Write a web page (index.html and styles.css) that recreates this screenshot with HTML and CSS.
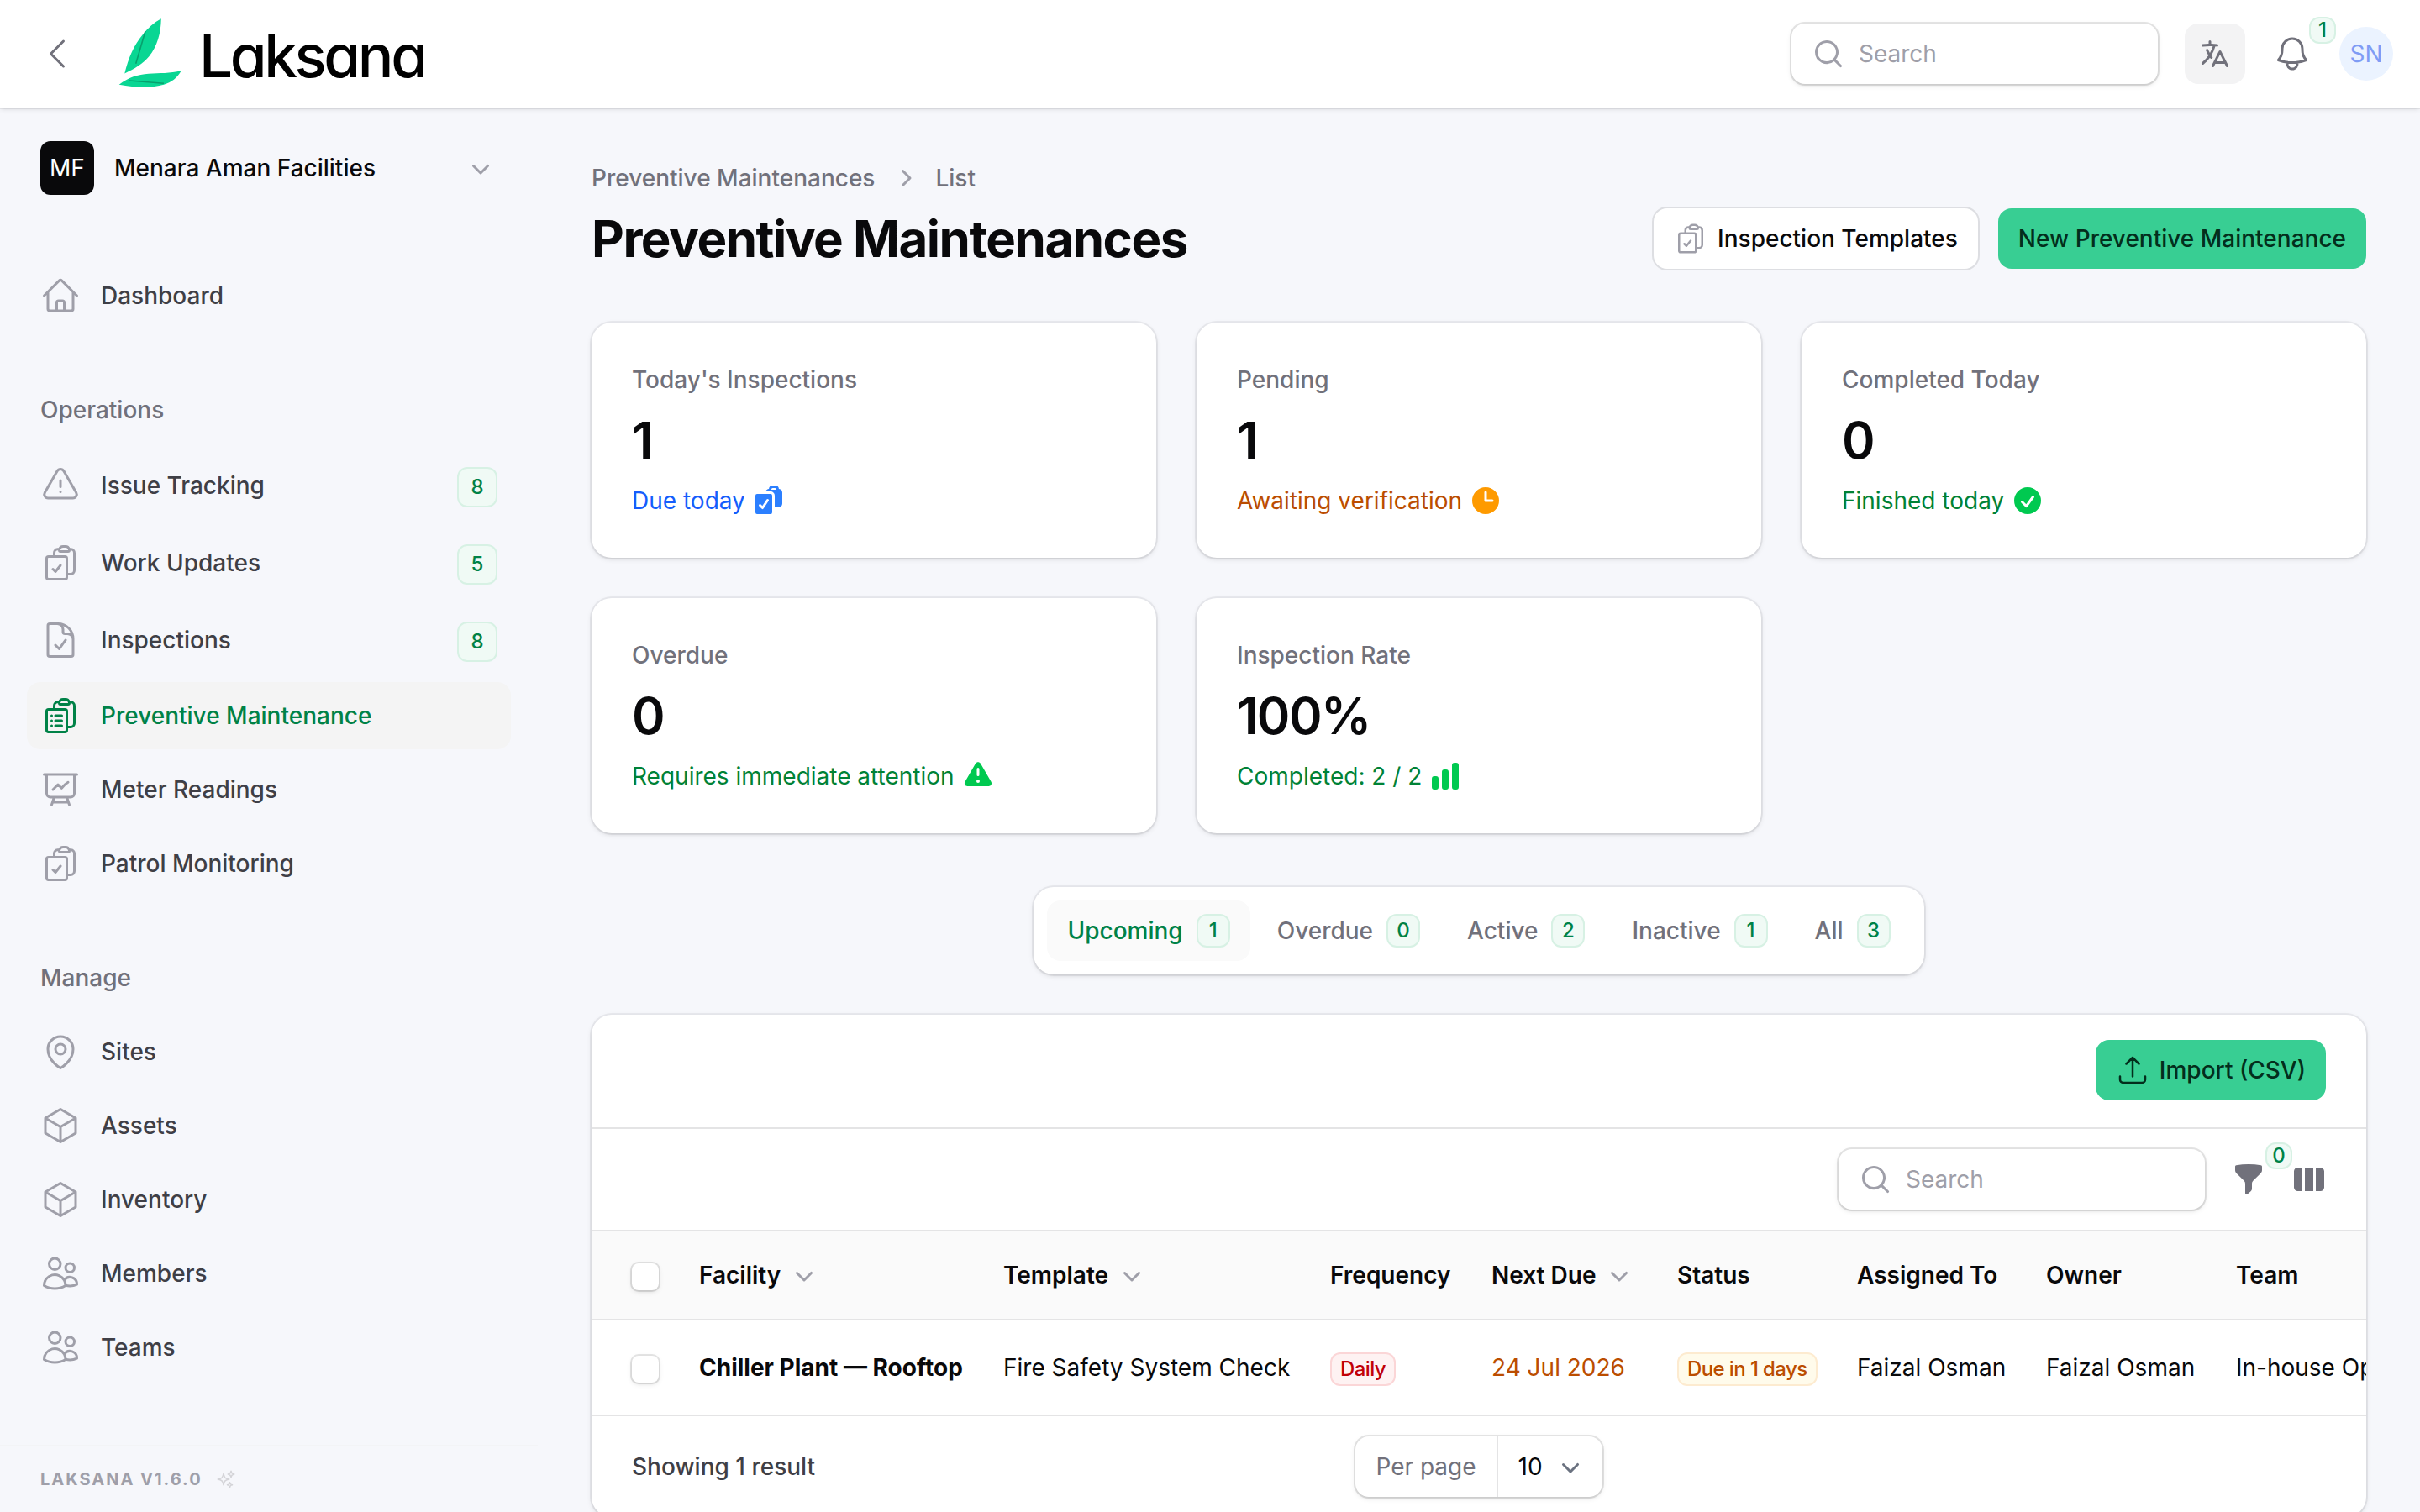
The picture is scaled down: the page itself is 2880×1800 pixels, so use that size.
FILE: index.html
```html
<!DOCTYPE html>
<html lang="en">
<head>
  <meta charset="UTF-8">
  <title>Preventive Maintenances - Laksana</title>
  <link rel="stylesheet" href="styles.css">
</head>
<body>
  <!-- icon sprite -->
  <svg class="sprite" aria-hidden="true">
    <symbol id="i-chevron-left" viewBox="0 0 24 24"><path d="M15.75 19.5 8.25 12l7.5-7.5"/></symbol>
    <symbol id="i-home" viewBox="0 0 24 24"><path d="m2.25 12 8.954-8.955c.44-.439 1.152-.439 1.591 0L21.75 12M4.5 9.75v10.125c0 .621.504 1.125 1.125 1.125H9.75v-4.875c0-.621.504-1.125 1.125-1.125h2.25c.621 0 1.125.504 1.125 1.125V21h4.125c.621 0 1.125-.504 1.125-1.125V9.75M8.25 21h8.25"/></symbol>
    <symbol id="i-warning" viewBox="0 0 24 24"><path d="M12 9v3.75m-9.303 3.376c-.866 1.5.217 3.374 1.948 3.374h14.71c1.73 0 2.813-1.874 1.948-3.374L13.949 3.378c-.866-1.5-3.032-1.5-3.898 0L2.697 16.126ZM12 15.75h.007v.008H12v-.008Z"/></symbol>
    <symbol id="i-clipboard-check" viewBox="0 0 24 24"><path d="M11.35 3.836c-.065.21-.1.433-.1.664 0 .414.336.75.75.75h4.5a.75.75 0 0 0 .75-.75 2.25 2.25 0 0 0-.1-.664m-5.8 0A2.251 2.251 0 0 1 13.5 2.25H15c1.012 0 1.867.668 2.15 1.586m-5.8 0c-.376.023-.75.05-1.124.08C9.095 4.01 8.25 4.973 8.25 6.108V8.25m8.9-4.414c.376.023.75.05 1.124.08 1.131.094 1.976 1.057 1.976 2.192V16.5A2.25 2.25 0 0 1 18 18.75h-2.25m-7.5-10.5H4.875c-.621 0-1.125.504-1.125 1.125v11.25c0 .621.504 1.125 1.125 1.125h9.75c.621 0 1.125-.504 1.125-1.125V18.75m-7.5-10.5h6.375c.621 0 1.125.504 1.125 1.125v9.375m-8.25-3 1.5 1.5 3-3.75"/></symbol>
    <symbol id="i-clipboard-list" viewBox="0 0 24 24"><path d="M9 12h3.75M9 15h3.75M9 18h3.75m3 .75H18a2.25 2.25 0 0 0 2.25-2.25V6.108c0-1.135-.845-2.098-1.976-2.192a48.424 48.424 0 0 0-1.123-.08m-5.801 0c-.065.21-.1.433-.1.664 0 .414.336.75.75.75h4.5a.75.75 0 0 0 .75-.75 2.25 2.25 0 0 0-.1-.664m-5.8 0A2.251 2.251 0 0 1 13.5 2.25H15c1.012 0 1.867.668 2.15 1.586m-5.8 0c-.376.023-.75.05-1.124.08C9.095 4.01 8.25 4.973 8.25 6.108V8.25m0 0H4.875c-.621 0-1.125.504-1.125 1.125v11.25c0 .621.504 1.125 1.125 1.125h9.75c.621 0 1.125-.504 1.125-1.125V9.375c0-.621-.504-1.125-1.125-1.125H8.25ZM6.75 12h.008v.008H6.75V12Zm0 3h.008v.008H6.75V15Zm0 3h.008v.008H6.75V18Z"/></symbol>
    <symbol id="i-document-check" viewBox="0 0 24 24"><path d="M10.125 2.25h-4.5c-.621 0-1.125.504-1.125 1.125v17.25c0 .621.504 1.125 1.125 1.125h12.75c.621 0 1.125-.504 1.125-1.125v-9M10.125 2.25h.375a9 9 0 0 1 9 9v.375M10.125 2.25A3.375 3.375 0 0 1 13.5 5.625v1.5c0 .621.504 1.125 1.125 1.125h1.5a3.375 3.375 0 0 1 3.375 3.375M9 15l2.25 2.25L15 12"/></symbol>
    <symbol id="i-presentation" viewBox="0 0 24 24"><path d="M3.75 3v11.25A2.25 2.25 0 0 0 6 16.5h2.25M3.75 3h-1.5m1.5 0h16.5m0 0h1.5m-1.5 0v11.25A2.25 2.25 0 0 1 18 16.5h-2.25m-7.5 0h7.5m-7.5 0-1 3m8.5-3 1 3m0 0 .5 1.5m-.5-1.5h-9.5m0 0-.5 1.5m.75-9 3-3 2.148 2.148A12.061 12.061 0 0 1 16.5 7.605"/></symbol>
    <symbol id="i-map-pin" viewBox="0 0 24 24"><path d="M15 10.5a3 3 0 1 1-6 0 3 3 0 0 1 6 0Z"/><path d="M19.5 10.5c0 7.142-7.5 11.25-7.5 11.25S4.5 17.642 4.5 10.5a7.5 7.5 0 1 1 15 0Z"/></symbol>
    <symbol id="i-cube" viewBox="0 0 24 24"><path d="m21 7.5-9-5.25L3 7.5m18 0-9 5.25m9-5.25v9l-9 5.25M3 7.5l9 5.25M3 7.5v9l9 5.25m0-9v9"/></symbol>
    <symbol id="i-users" viewBox="0 0 24 24"><path d="M15 19.128a9.38 9.38 0 0 0 2.625.372 9.337 9.337 0 0 0 4.121-.952 4.125 4.125 0 0 0-7.533-2.493M15 19.128v-.003c0-1.113-.285-2.16-.786-3.07M15 19.128v.106A12.318 12.318 0 0 1 8.624 21c-2.331 0-4.512-.645-6.374-1.766l-.001-.109a6.375 6.375 0 0 1 11.964-3.07M12 6.375a3.375 3.375 0 1 1-6.75 0 3.375 3.375 0 0 1 6.75 0Zm8.25 2.25a2.625 2.625 0 1 1-5.25 0 2.625 2.625 0 0 1 5.25 0Z"/></symbol>
    <symbol id="i-sparkles" viewBox="0 0 24 24"><path d="M9.813 15.904 9 18.75l-.813-2.846a4.5 4.5 0 0 0-3.09-3.09L2.25 12l2.846-.813a4.5 4.5 0 0 0 3.09-3.09L9 5.25l.813 2.846a4.5 4.5 0 0 0 3.09 3.09L15.75 12l-2.846.813a4.5 4.5 0 0 0-3.09 3.09ZM18.259 8.715 18 9.75l-.259-1.035a3.375 3.375 0 0 0-2.455-2.456L14.25 6l1.036-.259a3.375 3.375 0 0 0 2.455-2.456L18 2.25l.259 1.035a3.375 3.375 0 0 0 2.456 2.456L21.75 6l-1.035.259a3.375 3.375 0 0 0-2.456 2.456ZM16.894 20.567 16.5 21.75l-.394-1.183a2.25 2.25 0 0 0-1.423-1.423L13.5 18.75l1.183-.394a2.25 2.25 0 0 0 1.423-1.423l.394-1.183.394 1.183a2.25 2.25 0 0 0 1.423 1.423l1.183.394-1.183.394a2.25 2.25 0 0 0-1.423 1.423Z"/></symbol>
    <symbol id="i-bell" viewBox="0 0 24 24"><path d="M14.857 17.082a23.848 23.848 0 0 0 5.454-1.31A8.967 8.967 0 0 1 18 9.75V9A6 6 0 0 0 6 9v.75a8.967 8.967 0 0 1-2.312 6.022c1.733.64 3.56 1.085 5.455 1.31m5.714 0a24.255 24.255 0 0 1-5.714 0m5.714 0a3 3 0 1 1-5.714 0"/></symbol>
    <symbol id="i-upload" viewBox="0 0 24 24"><path d="M3 16.5v2.25A2.25 2.25 0 0 0 5.25 21h13.5A2.25 2.25 0 0 0 21 18.75V16.5m-13.5-9L12 3m0 0 4.5 4.5M12 3v13.5"/></symbol>

    <symbol id="s-chevron-down" viewBox="0 0 20 20"><path fill-rule="evenodd" d="M5.22 8.22a.75.75 0 0 1 1.06 0L10 11.94l3.72-3.72a.75.75 0 1 1 1.06 1.06l-4.25 4.25a.75.75 0 0 1-1.06 0L5.22 9.28a.75.75 0 0 1 0-1.06Z"/></symbol>
    <symbol id="s-chevron-right" viewBox="0 0 20 20"><path fill-rule="evenodd" d="M8.22 5.22a.75.75 0 0 1 1.06 0l4.25 4.25a.75.75 0 0 1 0 1.06l-4.25 4.25a.75.75 0 0 1-1.06-1.06L11.94 10 8.22 6.28a.75.75 0 0 1 0-1.06Z"/></symbol>
    <symbol id="s-search" viewBox="0 0 20 20"><path fill-rule="evenodd" d="M9 3.5a5.5 5.5 0 1 0 0 11 5.5 5.5 0 0 0 0-11ZM2 9a7 7 0 1 1 12.452 4.391l3.328 3.329a.75.75 0 1 1-1.06 1.06l-3.329-3.328A7 7 0 0 1 2 9Z"/></symbol>
    <symbol id="s-language" viewBox="0 0 20 20"><path d="M7.75 2.75a.75.75 0 0 0-1.5 0v1.258a32.987 32.987 0 0 0-3.599.278.75.75 0 1 0 .198 1.487A31.545 31.545 0 0 1 8.7 5.545 19.381 19.381 0 0 1 7 9.56a19.418 19.418 0 0 1-1.002-2.05.75.75 0 0 0-1.384.577 20.935 20.935 0 0 0 1.492 2.91 19.613 19.613 0 0 1-3.828 4.154.75.75 0 1 0 .945 1.164A21.116 21.116 0 0 0 7 12.331c.095.132.192.262.29.391a.75.75 0 0 0 1.194-.91c-.204-.266-.4-.538-.59-.815a20.888 20.888 0 0 0 2.333-5.332c.31.031.618.068.924.108a.75.75 0 0 0 .198-1.487 32.832 32.832 0 0 0-3.599-.278V2.75Z"/><path fill-rule="evenodd" d="M13 8a.75.75 0 0 1 .671.415l4.25 8.5a.75.75 0 1 1-1.342.67L15.787 16h-5.573l-.793 1.585a.75.75 0 1 1-1.342-.67l4.25-8.5A.75.75 0 0 1 13 8Zm2.037 6.5L13 10.427 10.964 14.5h4.073Z"/></symbol>
    <symbol id="s-clock" viewBox="0 0 20 20"><path fill-rule="evenodd" d="M10 18a8 8 0 1 0 0-16 8 8 0 0 0 0 16Zm.75-13a.75.75 0 0 0-1.5 0v5c0 .414.336.75.75.75h4a.75.75 0 0 0 0-1.5h-3.25V5Z"/></symbol>
    <symbol id="s-check-circle" viewBox="0 0 20 20"><path fill-rule="evenodd" d="M10 18a8 8 0 1 0 0-16 8 8 0 0 0 0 16Zm3.857-9.809a.75.75 0 0 0-1.214-.882l-3.483 4.79-1.88-1.88a.75.75 0 1 0-1.06 1.061l2.5 2.5a.75.75 0 0 0 1.137-.089l4-5.5Z"/></symbol>
    <symbol id="s-warning" viewBox="0 0 20 20"><path fill-rule="evenodd" d="M8.485 2.495c.673-1.167 2.357-1.167 3.03 0l6.28 10.875c.673 1.167-.17 2.625-1.516 2.625H3.72c-1.347 0-2.189-1.458-1.515-2.625L8.485 2.495ZM10 5a.75.75 0 0 1 .75.75v3.5a.75.75 0 0 1-1.5 0v-3.5A.75.75 0 0 1 10 5Zm0 9a1 1 0 1 0 0-2 1 1 0 0 0 0 2Z"/></symbol>
    <symbol id="s-chart-bar" viewBox="0 0 20 20"><path d="M15.5 2A1.5 1.5 0 0 0 14 3.5v13a1.5 1.5 0 0 0 1.5 1.5h1a1.5 1.5 0 0 0 1.5-1.5v-13A1.5 1.5 0 0 0 16.5 2h-1ZM9.5 6A1.5 1.5 0 0 0 8 7.5v9A1.5 1.5 0 0 0 9.5 18h1a1.5 1.5 0 0 0 1.5-1.5v-9A1.5 1.5 0 0 0 10.5 6h-1ZM3.5 10A1.5 1.5 0 0 0 2 11.5v5A1.5 1.5 0 0 0 3.5 18h1A1.5 1.5 0 0 0 6 16.5v-5A1.5 1.5 0 0 0 4.5 10h-1Z"/></symbol>
    <symbol id="s-clipboard-check" viewBox="0 0 20 20"><path fill-rule="evenodd" d="M18 5.25a2.25 2.25 0 0 0-2.012-2.238A2.25 2.25 0 0 0 13.75 1h-1.5a2.25 2.25 0 0 0-2.238 2.012c-.875.092-1.6.686-1.884 1.488H11A2.5 2.5 0 0 1 13.5 7v7h2.25A2.25 2.25 0 0 0 18 11.75v-6.5ZM12.25 2.5a.75.75 0 0 0-.75.75v.25h3v-.25a.75.75 0 0 0-.75-.75h-1.5Z"/><path fill-rule="evenodd" d="M3 6a1 1 0 0 0-1 1v10a1 1 0 0 0 1 1h8a1 1 0 0 0 1-1V7a1 1 0 0 0-1-1H3Zm6.874 4.166a.75.75 0 1 0-1.248-.832l-2.493 3.739-.853-.853a.75.75 0 0 0-1.06 1.06l1.5 1.5a.75.75 0 0 0 1.154-.114l3-4.5Z"/></symbol>
    <symbol id="s-funnel" viewBox="0 0 20 20"><path d="M2.628 1.601C5.028 1.206 7.49 1 10 1s4.973.206 7.372.601a.75.75 0 0 1 .628.74v2.288a2.25 2.25 0 0 1-.659 1.59l-4.682 4.683a2.25 2.25 0 0 0-.659 1.59v3.037c0 .684-.31 1.33-.844 1.757l-1.937 1.55A.75.75 0 0 1 8 18.25v-5.757a2.25 2.25 0 0 0-.659-1.591L2.659 6.22A2.25 2.25 0 0 1 2 4.629V2.34a.75.75 0 0 1 .628-.74Z"/></symbol>
    <symbol id="s-columns" viewBox="0 0 20 20"><path d="M14 17h2.75A2.25 2.25 0 0 0 19 14.75v-9.5A2.25 2.25 0 0 0 16.75 3H14v14ZM12.5 3h-5v14h5V3ZM3.25 3H6v14H3.25A2.25 2.25 0 0 1 1 14.75v-9.5A2.25 2.25 0 0 1 3.25 3Z"/></symbol>
  </svg>

  <header class="topbar">
    <button class="icon-btn topbar-collapse"><svg class="icon icon-lg"><use href="#i-chevron-left"/></svg></button>
    <a class="logo">
      <svg class="logo-mark" viewBox="0 0 78 86">
        <path class="leaf" d="M51.8 2.2C43 7 36 13 30 21C19 34 13 49 8.3 67.4C20 62 30 56 37.5 47C47 35 51.5 20 51.8 2.2Z"/>
        <path class="leaf" d="M1.7 80.7C13 72 24 68.5 37 67.7C50 67 62 67.5 75.7 64.3C71 73 64 78 55 80.7C40 85 22 84.500 1.7 80.7Z"/>
        <path class="vein" d="M33 17 21.7 55.7M14 76 55 79.3"/>
      </svg>
      <span class="logo-text">Laksana</span>
    </a>
    <div class="topbar-end">
      <div class="search"><svg class="icon solid"><use href="#s-search"/></svg><span>Search</span></div>
      <button class="lang-btn"><svg class="icon solid"><use href="#s-language"/></svg></button>
      <button class="icon-btn"><svg class="icon icon-lg"><use href="#i-bell"/></svg><span class="badge badge-float bell-badge">1</span></button>
      <div class="avatar">SN</div>
    </div>
  </header>

  <div class="layout">
    <aside class="sidebar">
      <div class="tenant">
        <span class="tenant-logo">MF</span>
        <span class="tenant-name">Menara Aman Facilities</span>
        <svg class="icon solid muted"><use href="#s-chevron-down"/></svg>
      </div>

      <nav class="nav">
        <div class="nav-group">
          <a class="nav-item"><svg class="icon icon-lg"><use href="#i-home"/></svg>Dashboard</a>
        </div>
        <div class="nav-group">
          <div class="nav-label">Operations</div>
          <a class="nav-item has-badge"><svg class="icon icon-lg"><use href="#i-warning"/></svg>Issue Tracking<span class="badge badge-nav">8</span></a>
          <a class="nav-item has-badge"><svg class="icon icon-lg"><use href="#i-clipboard-check"/></svg>Work Updates<span class="badge badge-nav">5</span></a>
          <a class="nav-item has-badge"><svg class="icon icon-lg"><use href="#i-document-check"/></svg>Inspections<span class="badge badge-nav">8</span></a>
          <a class="nav-item active"><svg class="icon icon-lg"><use href="#i-clipboard-list"/></svg>Preventive Maintenance</a>
          <a class="nav-item"><svg class="icon icon-lg"><use href="#i-presentation"/></svg>Meter Readings</a>
          <a class="nav-item"><svg class="icon icon-lg"><use href="#i-clipboard-check"/></svg>Patrol Monitoring</a>
        </div>
        <div class="nav-group">
          <div class="nav-label">Manage</div>
          <a class="nav-item"><svg class="icon icon-lg"><use href="#i-map-pin"/></svg>Sites</a>
          <a class="nav-item"><svg class="icon icon-lg"><use href="#i-cube"/></svg>Assets</a>
          <a class="nav-item"><svg class="icon icon-lg"><use href="#i-cube"/></svg>Inventory</a>
          <a class="nav-item"><svg class="icon icon-lg"><use href="#i-users"/></svg>Members</a>
          <a class="nav-item"><svg class="icon icon-lg"><use href="#i-users"/></svg>Teams</a>
        </div>
      </nav>

      <div class="sidebar-footer">
        <span>LAKSANA V1.6.0</span>
        <svg class="icon icon-xs"><use href="#i-sparkles"/></svg>
      </div>
    </aside>

    <main class="main">
      <div class="page-header">
        <div>
          <div class="breadcrumbs">
            <span>Preventive Maintenances</span>
            <svg class="icon solid muted"><use href="#s-chevron-right"/></svg>
            <span>List</span>
          </div>
          <h1>Preventive Maintenances</h1>
        </div>
        <div class="actions">
          <button class="btn btn-gray"><svg class="icon"><use href="#i-clipboard-check"/></svg>Inspection Templates</button>
          <button class="btn btn-primary">New Preventive Maintenance</button>
        </div>
      </div>

      <div class="stats">
        <div class="stat">
          <div class="stat-label">Today's Inspections</div>
          <div class="stat-value">1</div>
          <div class="stat-desc info">Due today<svg class="icon solid"><use href="#s-clipboard-check"/></svg></div>
        </div>
        <div class="stat">
          <div class="stat-label">Pending</div>
          <div class="stat-value">1</div>
          <div class="stat-desc warning">Awaiting verification<svg class="icon solid"><use href="#s-clock"/></svg></div>
        </div>
        <div class="stat">
          <div class="stat-label">Completed Today</div>
          <div class="stat-value">0</div>
          <div class="stat-desc success">Finished today<svg class="icon solid"><use href="#s-check-circle"/></svg></div>
        </div>
        <div class="stat">
          <div class="stat-label">Overdue</div>
          <div class="stat-value">0</div>
          <div class="stat-desc success">Requires immediate attention<svg class="icon solid"><use href="#s-warning"/></svg></div>
        </div>
        <div class="stat">
          <div class="stat-label">Inspection Rate</div>
          <div class="stat-value">100%</div>
          <div class="stat-desc success">Completed: 2 / 2<svg class="icon solid"><use href="#s-chart-bar"/></svg></div>
        </div>
      </div>

      <div class="tabs">
        <a class="tab active">Upcoming<span class="badge">1</span></a>
        <a class="tab">Overdue<span class="badge">0</span></a>
        <a class="tab">Active<span class="badge">2</span></a>
        <a class="tab">Inactive<span class="badge">1</span></a>
        <a class="tab">All<span class="badge">3</span></a>
      </div>

      <section class="table-card">
        <div class="table-header">
          <button class="btn btn-primary"><svg class="icon"><use href="#i-upload"/></svg>Import (CSV)</button>
        </div>
        <div class="table-toolbar">
          <div class="search"><svg class="icon solid"><use href="#s-search"/></svg><span>Search</span></div>
          <button class="icon-btn"><svg class="icon solid"><use href="#s-funnel"/></svg><span class="badge badge-float filter-badge">0</span></button>
          <button class="icon-btn"><svg class="icon solid"><use href="#s-columns"/></svg></button>
        </div>
        <div class="table-scroll">
          <table>
            <colgroup>
              <col class="col-check"><col class="col-facility"><col class="col-template"><col class="col-frequency"><col class="col-due"><col class="col-status"><col class="col-assigned"><col class="col-owner"><col class="col-team">
            </colgroup>
            <thead>
              <tr>
                <th class="check-cell"><span class="checkbox"></span></th>
                <th><span class="sortable">Facility<svg class="icon solid muted"><use href="#s-chevron-down"/></svg></span></th>
                <th><span class="sortable">Template<svg class="icon solid muted"><use href="#s-chevron-down"/></svg></span></th>
                <th>Frequency</th>
                <th><span class="sortable">Next Due<svg class="icon solid muted"><use href="#s-chevron-down"/></svg></span></th>
                <th>Status</th>
                <th>Assigned To</th>
                <th>Owner</th>
                <th>Team</th>
              </tr>
            </thead>
            <tbody>
              <tr>
                <td class="check-cell"><span class="checkbox"></span></td>
                <td class="bold">Chiller Plant — Rooftop</td>
                <td>Fire Safety System Check</td>
                <td><span class="pill pill-danger">Daily</span></td>
                <td class="warning">24 Jul 2026</td>
                <td><span class="pill pill-warning">Due in 1 days</span></td>
                <td>Faizal Osman</td>
                <td>Faizal Osman</td>
                <td>In-house Operations</td>
              </tr>
            </tbody>
          </table>
        </div>
        <div class="pagination">
          <span class="overview">Showing 1 result</span>
          <div class="per-page">
            <span class="per-page-label">Per page</span>
            <span class="per-page-value">10<svg class="icon solid"><use href="#s-chevron-down"/></svg></span>
          </div>
        </div>
      </section>
    </main>
  </div>
</body>
</html>
```

FILE: styles.css
```css
* {
  box-sizing: border-box;
}
body {
  margin: 0;
  height: 1800px;
  overflow: hidden;
  background: #f6f7fb;
  color: #09090b;
  font-family: Inter, 'Liberation Sans', sans-serif;
  font-size: 28px;
  line-height: 40px;
}
button {
  font: inherit;
  border: none;
  background: none;
  padding: 0;
}
.sprite {
  display: none;
}

/* icons */
.icon {
  width: 40px;
  height: 40px;
  flex-shrink: 0;
  fill: none;
  stroke: currentColor;
  stroke-width: 1.5;
  stroke-linecap: round;
  stroke-linejoin: round;
}
.icon.solid {
  fill: currentColor;
  stroke: none;
}
.icon-lg {
  width: 48px;
  height: 48px;
}
.icon-xs {
  width: 24px;
  height: 24px;
}
.muted {
  color: #9f9fa9;
}
.icon-btn {
  position: relative;
  display: flex;
  color: #71717b;
}

/* badges */
.badge {
  display: flex;
  align-items: center;
  justify-content: center;
  width: 40px;
  height: 40px;
  border: 2px solid #d7f1e4;
  border-radius: 12px;
  background: #f0faf5;
  color: #008247;
  font-size: 24px;
  line-height: 32px;
  font-weight: 500;
}
.badge-nav {
  width: 48px;
  height: 48px;
  margin: 4px 0 0 auto;
}
.badge-float {
  position: absolute;
  width: 32px;
  height: 32px;
}
.bell-badge {
  left: 44px;
  top: -20px;
}
.filter-badge {
  left: 40px;
  top: -24px;
}

/* topbar */
.topbar {
  position: relative;
  display: flex;
  align-items: center;
  height: 128px;
  padding: 0 32px 0 44px;
  background: #fff;
  box-shadow: 0 0 0 2px rgba(9, 9, 11, 0.05), 0 2px 6px rgba(0, 0, 0, 0.1), 0 2px 4px -2px rgba(0, 0, 0, 0.1);
}
.logo {
  display: flex;
  align-items: center;
  margin-left: 48px;
}
.logo-mark {
  width: 78px;
  height: 86px;
  margin-bottom: 2px;
}
.leaf {
  fill: #09d693;
}
.vein {
  fill: none;
  stroke: #07a06d;
  stroke-width: 1.6;
}
.logo-text {
  margin-left: 19px;
  padding-top: 3px;
  font-size: 71px;
  line-height: 86px;
  color: #000;
  font-weight: 500;
  letter-spacing: -3.4px;
  font-feature-settings: 'cv11';
}
.topbar-end {
  display: flex;
  align-items: center;
  gap: 32px;
  margin-left: auto;
}
.search {
  display: flex;
  align-items: center;
  gap: 16px;
  width: 436px;
  height: 72px;
  padding: 0 24px;
  border-radius: 16px;
  background: #fff;
  color: #9f9fa9;
  box-shadow: 0 0 0 2px rgba(9, 9, 11, 0.1), 0 2px 6px rgba(0, 0, 0, 0.1), 0 2px 4px -2px rgba(0, 0, 0, 0.1);
}
.lang-btn {
  display: flex;
  padding: 16px;
  border-radius: 16px;
  background: #f3f3f4;
  color: #71717b;
}
.avatar {
  width: 64px;
  height: 64px;
  border-radius: 50%;
  background: #ebf3ff;
  color: #7f9cf5;
  line-height: 64px;
  text-align: center;
}

/* sidebar */
.layout {
  display: flex;
  height: 1672px;
}
.sidebar {
  display: flex;
  flex-direction: column;
  width: 640px;
}
.tenant {
  display: flex;
  align-items: center;
  gap: 24px;
  padding: 40px 48px 0;
  font-weight: 500;
}
.tenant-logo {
  width: 64px;
  height: 64px;
  border-radius: 12px;
  background: #09090b;
  color: #fff;
  font-weight: 400;
  line-height: 64px;
  text-align: center;
}
.tenant .icon {
  margin-left: auto;
}
.nav {
  display: flex;
  flex-direction: column;
  gap: 56px;
  flex: 1;
  padding: 80px 32px 0;
}
.nav-group {
  display: flex;
  flex-direction: column;
  gap: 8px;
}
.nav-label {
  padding: 16px;
  line-height: 48px;
  color: #71717b;
  font-weight: 500;
}
.nav-item {
  display: flex;
  align-items: center;
  gap: 24px;
  height: 80px;
  padding: 0 16px;
  border-radius: 16px;
  color: #3f3f46;
  font-weight: 500;
}
.nav-item.has-badge {
  height: 84px;
}
.nav-item .icon {
  color: #9f9fa9;
}
.nav-item.active {
  background: #f4f4f4;
  color: #008247;
}
.nav-item.active .icon {
  color: #008247;
}
.sidebar-footer {
  display: flex;
  align-items: center;
  gap: 16px;
  height: 80px;
  border-top: 1px solid #f3f4f6;
  padding: 0 48px;
  color: #9f9fa9;
  font-size: 20px;
  font-weight: 700;
  letter-spacing: 2px;
}
.sidebar-footer .icon {
  color: #d4d4d8;
}

/* main */
.main {
  flex: 1;
  min-width: 0;
  padding: 64px;
}
.page-header {
  display: flex;
  justify-content: space-between;
  align-items: flex-end;
}
.breadcrumbs {
  display: flex;
  gap: 16px;
  margin-bottom: 16px;
  color: #71717b;
  font-weight: 500;
}
h1 {
  margin: 0;
  font-size: 60px;
  line-height: 72px;
  font-weight: 700;
  letter-spacing: -1.5px;
}
.actions {
  display: flex;
  gap: 24px;
}
.btn {
  display: flex;
  align-items: center;
  gap: 12px;
  height: 72px;
  padding: 0 24px;
  border-radius: 16px;
  font-weight: 500;
  color: #09090b;
}
.btn-gray {
  background: #fff;
  box-shadow: 0 0 0 2px #dddee2;
}
.btn-gray .icon {
  color: #9f9fa9;
}
.btn-primary {
  background: #38ce93;
  color: #032e1c;
}

/* stats */
.stats {
  display: grid;
  grid-template-columns: repeat(3, 1fr);
  gap: 48px;
  margin-top: 64px;
}
.stat,
.tabs,
.table-card {
  border-radius: 24px;
  background: #fff;
  box-shadow: 0 0 0 2px rgba(9, 9, 11, 0.05), 0 2px 6px rgba(0, 0, 0, 0.1), 0 2px 4px -2px rgba(0, 0, 0, 0.1);
}
.stat {
  display: flex;
  flex-direction: column;
  gap: 16px;
  padding: 48px;
}
.stat-label {
  color: #71717b;
  font-weight: 500;
}
.stat-value {
  font-size: 60px;
  line-height: 72px;
  font-weight: 600;
  letter-spacing: -1.5px;
}
.stat-desc {
  display: flex;
  gap: 8px;
}
.info {
  color: #155dfc;
}
.info .icon {
  color: #2b7fff;
}
.warning {
  color: #bb4d00;
}
.warning .icon {
  color: #fe9a00;
}
.success {
  color: #008236;
}
.success .icon {
  color: #00c950;
}

/* tabs */
.tabs {
  display: flex;
  gap: 8px;
  width: fit-content;
  margin: 64px auto 48px;
  padding: 16px;
}
.tab {
  display: flex;
  align-items: center;
  gap: 16px;
  height: 72px;
  padding: 0 24px;
  border-radius: 16px;
  color: #71717b;
  font-weight: 500;
}
.tab.active {
  background: #fafafa;
  color: #008247;
}

/* table */
.table-card {
  overflow: hidden;
}
.table-header {
  display: flex;
  justify-content: flex-end;
  padding: 30px 48px 32px;
  border-bottom: 2px solid #e4e4e5;
}
.table-toolbar {
  display: flex;
  align-items: center;
  justify-content: flex-end;
  gap: 32px;
  height: 122px;
  padding: 0 48px;
  border-bottom: 2px solid #e4e4e5;
}
.table-scroll {
  overflow: hidden;
}
table {
  width: 2257px;
  table-layout: fixed;
  border-collapse: separate;
  border-spacing: 0;
}
.col-check { width: 104px; }
.col-facility { width: 362px; }
.col-template { width: 389px; }
.col-frequency { width: 192px; }
.col-due { width: 221px; }
.col-status { width: 214px; }
.col-assigned { width: 225px; }
.col-owner { width: 226px; }
.col-team { width: 324px; }
th, td {
  padding: 0 24px;
  text-align: left;
  white-space: nowrap;
  border-bottom: 2px solid #e4e4e5;
}
th {
  height: 106px;
  background: #fafafa;
  font-weight: 600;
}
td {
  height: 114px;
}
.check-cell {
  padding: 4px 0 0 48px;
}
.bold {
  font-weight: 700;
}
.sortable {
  display: flex;
  gap: 8px;
}
.checkbox {
  display: block;
  width: 32px;
  height: 32px;
  border-radius: 8px;
  background: #fff;
  box-shadow: 0 0 0 2px rgba(9, 9, 11, 0.1), 0 2px 6px rgba(0, 0, 0, 0.1), 0 2px 4px -2px rgba(0, 0, 0, 0.1);
}
.pill {
  display: inline-flex;
  align-items: center;
  height: 40px;
  margin-top: 2px;
  padding: 0 10px;
  border: 2px solid;
  border-radius: 12px;
  font-size: 24px;
  font-weight: 500;
  letter-spacing: -0.6px;
  vertical-align: middle;
}
.pill-danger {
  color: #c10007;
  background: #fef2f2;
  border-color: #fbd6d7;
}
.pill-warning {
  color: #bb4d00;
  background: #fffbeb;
  border-color: #fdebd0;
}
.pagination {
  display: grid;
  grid-template-columns: 1fr auto 1fr;
  align-items: center;
  padding: 24px 48px;
}
.overview {
  color: #3f3f46;
  font-weight: 500;
}
.per-page {
  display: flex;
  height: 72px;
  border-radius: 16px;
  line-height: 72px;
  box-shadow: 0 0 0 2px rgba(9, 9, 11, 0.1), 0 2px 6px rgba(0, 0, 0, 0.1), 0 2px 4px -2px rgba(0, 0, 0, 0.1);
}
.per-page-label {
  padding: 0 24px;
  border-right: 2px solid #e4e4e5;
  color: #71717b;
}
.per-page-value {
  display: flex;
  align-items: center;
  gap: 13px;
  padding: 0 18px 0 24px;
}
.per-page-value .icon {
  color: #6b7280;
}
```
